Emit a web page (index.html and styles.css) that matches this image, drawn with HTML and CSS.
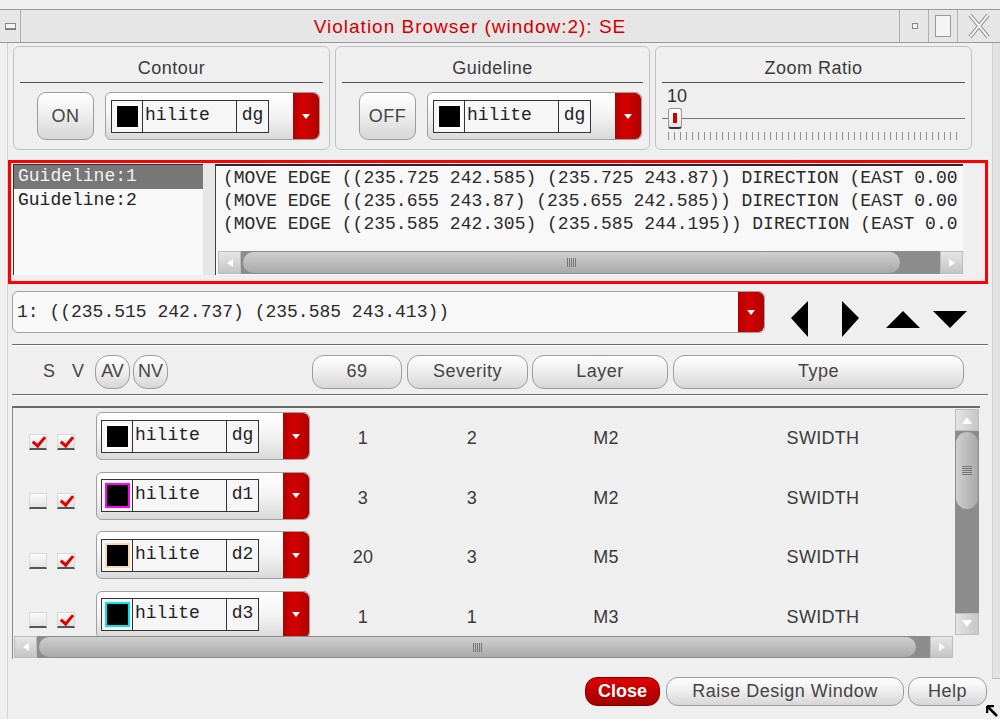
FILE: index.html
```html
<!DOCTYPE html>
<html>
<head>
<meta charset="utf-8">
<title>Violation Browser</title>
<link rel="stylesheet" href="styles.css">
</head>
<body>
<div class="window">
  <div class="titlebar">
    <div class="tb-btn tb-menu"><span class="menu-glyph"></span></div>
    <div class="tb-title">Violation Browser (window:2): SE</div>
    <div class="tb-btn tb-min"><span class="min-glyph"></span></div>
    <div class="tb-btn tb-max"><span class="max-glyph"></span></div>
    <div class="tb-btn tb-close">
      <svg width="24" height="26" viewBox="0 0 24 26"><path d="M3 2 L21 24 M21 2 L3 24" stroke="#8a8a8a" stroke-width="4" fill="none"/><path d="M3 2 L21 24 M21 2 L3 24" stroke="#f2f2f2" stroke-width="2" fill="none"/></svg>
    </div>
  </div>
  <div class="main">
    <div class="frame-left"></div>
    <div class="content">
      <div class="groups">
        <div class="group">
          <div class="group-title">Contour</div>
          <div class="group-body">
            <div class="btn toggle">ON</div>
            <div class="combo">
              <div class="cbox"><div class="sw"><i class="c-white"></i></div><div class="name">hilite</div><div class="suf">dg</div></div>
              <div class="red"><span class="tri"></span></div>
            </div>
          </div>
        </div>
        <div class="group">
          <div class="group-title">Guideline</div>
          <div class="group-body">
            <div class="btn toggle">OFF</div>
            <div class="combo">
              <div class="cbox"><div class="sw"><i class="c-white"></i></div><div class="name">hilite</div><div class="suf">dg</div></div>
              <div class="red"><span class="tri"></span></div>
            </div>
          </div>
        </div>
        <div class="group">
          <div class="group-title">Zoom Ratio</div>
          <div class="zoom-body">
            <div class="zoom-val">10</div>
            <div class="slider"><span class="thumb"><i></i></span></div>
            <div class="ticks"></div>
          </div>
        </div>
      </div>

      <div class="redbox">
        <div class="listbox">
          <div class="li sel">Guideline:1</div>
          <div class="li">Guideline:2</div>
        </div>
        <div class="sash"></div>
        <div class="textarea">
          <div class="lines">
            <div class="line">(MOVE EDGE ((235.725 242.585) (235.725 243.87)) DIRECTION (EAST 0.00</div>
            <div class="line">(MOVE EDGE ((235.655 243.87) (235.655 242.585)) DIRECTION (EAST 0.00</div>
            <div class="line">(MOVE EDGE ((235.585 242.305) (235.585 244.195)) DIRECTION (EAST 0.0</div>
          </div>
          <div class="hscroll">
            <div class="sarrow"><svg width="10" height="10" viewBox="0 0 10 10"><polygon points="8,1 8,9 2,5" fill="#fff"/></svg></div>
            <div class="strack"><div class="sthumb"><span class="grip-h"></span></div></div>
            <div class="sarrow"><svg width="10" height="10" viewBox="0 0 10 10"><polygon points="2,1 2,9 8,5" fill="#fff"/></svg></div>
          </div>
        </div>
      </div>

      <div class="navrow">
        <div class="field">
          <div class="field-text">1: ((235.515 242.737) (235.585 243.413))</div>
          <div class="red"><span class="tri"></span></div>
        </div>
        <svg class="nav nav-left" width="18" height="36" viewBox="0 0 18 36"><polygon points="17,0 17,36 0,17" fill="#000"/></svg>
        <svg class="nav nav-right" width="18" height="36" viewBox="0 0 18 36"><polygon points="1,0 1,36 18,17" fill="#000"/></svg>
        <svg class="nav nav-up" width="34" height="17" viewBox="0 0 34 17"><polygon points="0,17 34,17 17,0" fill="#000"/></svg>
        <svg class="nav nav-down" width="34" height="17" viewBox="0 0 34 17"><polygon points="0,0 34,0 17,17" fill="#000"/></svg>
      </div>

      <div class="sep sep1"></div>

      <div class="header">
        <span class="hl hl-s">S</span>
        <span class="hl hl-v">V</span>
        <div class="btn hbtn pill pill-av">AV</div>
        <div class="btn hbtn pill pill-nv">NV</div>
        <div class="btn hbtn h-num">69</div>
        <div class="btn hbtn h-sev">Severity</div>
        <div class="btn hbtn h-lay">Layer</div>
        <div class="btn hbtn h-type">Type</div>
      </div>

      <div class="sep sep2"></div>

      <div class="table">
        <div class="rows-area">
          <div class="rows">
            <div class="row">
              <span class="cb on"></span><span class="cb on"></span>
              <div class="combo rcombo">
                <div class="cbox"><div class="sw"><i class="c-white"></i></div><div class="name">hilite</div><div class="suf">dg</div></div>
                <div class="red"><span class="tri"></span></div>
              </div>
              <span class="cell c-num">1</span><span class="cell c-sev">2</span><span class="cell c-lay">M2</span><span class="cell c-type">SWIDTH</span>
            </div>
            <div class="row">
              <span class="cb"></span><span class="cb on"></span>
              <div class="combo rcombo">
                <div class="cbox"><div class="sw"><i class="c-mag"></i></div><div class="name">hilite</div><div class="suf">d1</div></div>
                <div class="red"><span class="tri"></span></div>
              </div>
              <span class="cell c-num">3</span><span class="cell c-sev">3</span><span class="cell c-lay">M2</span><span class="cell c-type">SWIDTH</span>
            </div>
            <div class="row">
              <span class="cb"></span><span class="cb on"></span>
              <div class="combo rcombo">
                <div class="cbox"><div class="sw"><i class="c-peach"></i></div><div class="name">hilite</div><div class="suf">d2</div></div>
                <div class="red"><span class="tri"></span></div>
              </div>
              <span class="cell c-num">20</span><span class="cell c-sev">3</span><span class="cell c-lay">M5</span><span class="cell c-type">SWIDTH</span>
            </div>
            <div class="row">
              <span class="cb"></span><span class="cb on"></span>
              <div class="combo rcombo">
                <div class="cbox"><div class="sw"><i class="c-cyan"></i></div><div class="name">hilite</div><div class="suf">d3</div></div>
                <div class="red"><span class="tri"></span></div>
              </div>
              <span class="cell c-num">1</span><span class="cell c-sev">1</span><span class="cell c-lay">M3</span><span class="cell c-type">SWIDTH</span>
            </div>
          </div>
          <div class="vscroll">
            <div class="varrow"><svg width="12" height="10" viewBox="0 0 12 10"><polygon points="1,9 11,9 6,2" fill="#fff"/></svg></div>
            <div class="vtrack"><div class="vthumb"><span class="grip-v"></span></div></div>
            <div class="varrow"><svg width="12" height="10" viewBox="0 0 12 10"><polygon points="1,1 11,1 6,8" fill="#fff"/></svg></div>
          </div>
        </div>
        <div class="hscroll hscroll2">
          <div class="sarrow"><svg width="10" height="10" viewBox="0 0 10 10"><polygon points="8,1 8,9 2,5" fill="#fff"/></svg></div>
          <div class="strack"><div class="sthumb"><span class="grip-h"></span></div></div>
          <div class="sarrow"><svg width="10" height="10" viewBox="0 0 10 10"><polygon points="2,1 2,9 8,5" fill="#fff"/></svg></div>
        </div>
      </div>

      <div class="bottom">
        <div class="btn bbtn close">Close</div>
        <div class="btn bbtn raise">Raise Design Window</div>
        <div class="btn bbtn help">Help</div>
      </div>
    </div>
    <div class="frame-right"><div class="fr-bar"></div></div>
  </div>
  <svg class="resize" width="12" height="12" viewBox="0 0 12 12"><path d="M1 1 L11 11 M1 1 L1 8 M1 1 L8 1" stroke="#000" stroke-width="2.5" fill="none"/></svg>
</div>
</body>
</html>
```

FILE: styles.css
```css
* { box-sizing: border-box; }
html, body { margin: 0; padding: 0; }
body {
  width: 1000px;
  height: 719px;
  overflow: hidden;
  background: #efefef;
  font-family: "Liberation Sans", Arial, sans-serif;
  color: #3a3a3a;
}
.window {
  width: 1000px;
  height: 719px;
  position: relative;
  display: flex;
  flex-direction: column;
  background: #efefef;
}

/* title bar */
.titlebar {
  height: 34px;
  margin-top: 9px;
  border-top: 1px solid #9a9a9a;
  border-bottom: 1px solid #9a9a9a;
  background: #e6e6e6;
  display: flex;
  flex: none;
}
.tb-btn {
  display: flex;
  align-items: center;
  justify-content: center;
}
.tb-menu { width: 21px; border-right: 1px solid #b0b0b0; }
.menu-glyph {
  width: 11px; height: 6px;
  border: 1px solid #888;
  background: #f4f4f4;
  box-shadow: 0 1px 0 #777;
}
.tb-title {
  flex: 1;
  text-align: center;
  color: #d10000;
  font-size: 19px;
  letter-spacing: 1px;
  line-height: 33px;
  padding-left: 20px;
}
.tb-min { width: 29px; border-left: 1px solid #b0b0b0; }
.min-glyph { width: 6px; height: 6px; border: 1px solid #888; background: #f4f4f4; margin-left: 2px; }
.tb-max { width: 29px; border-left: 1px solid #b0b0b0; }
.max-glyph { width: 16px; height: 22px; border: 1px solid #999; background: #f4f4f4; }
.tb-close { width: 43px; border-left: 1px solid #b0b0b0; }

.main { flex: 1; display: flex; }
.frame-left { width: 8px; border-right: 1px solid #d2d2d2; flex: none; }
.content { width: 980px; flex: none; display: flex; flex-direction: column; }
.frame-right { width: 12px; flex: none; display: flex; justify-content: flex-end; }
.fr-bar {
  width: 8px;
  height: 636px;
  background: #e2e2e2;
  border-left: 1px solid #cfcfcf;
  border-bottom: 1px solid #bbb;
}

/* groups */
.groups {
  display: flex;
  gap: 5px;
  padding: 3px 0 0 5px;
  height: 107px;
}
.group {
  height: 104px;
  border: 1px solid #c2c2c2;
  border-radius: 6px;
  padding: 0 6px;
  display: flex;
  flex-direction: column;
}
.group:nth-child(1) { width: 317px; }
.group:nth-child(2) { width: 315px; }
.group:nth-child(3) { width: 317px; }
.group-title {
  height: 36px;
  border-bottom: 1px solid #505050;
  text-align: center;
  font-size: 18px;
  letter-spacing: 0.5px;
  padding-top: 10px;
  line-height: 22px;
  color: #3a3a3a;
}
.group-body {
  display: flex;
  gap: 11px;
  padding: 9px 0 0 17px;
}

.btn {
  display: flex;
  align-items: center;
  justify-content: center;
  border: 1px solid #9c9c9c;
  background: linear-gradient(#ffffff, #efefef 45%, #d6d6d6);
  color: #444;
  font-size: 18px;
  letter-spacing: 0.5px;
}
.toggle { width: 57px; height: 48px; border-radius: 9px; }

.combo {
  width: 215px;
  height: 48px;
  border: 1px solid #a0a0a0;
  border-radius: 6px;
  background: linear-gradient(#ffffff, #f3f3f3 50%, #d9d9d9);
  display: flex;
  align-items: center;
  padding-left: 5px;
  flex: none;
}
.cbox {
  display: flex;
  height: 33px;
  border: 1px solid #333;
  background: #f6f6f6;
}
.sw {
  width: 31px;
  border-right: 1px solid #333;
  display: flex;
  align-items: center;
  justify-content: center;
}
.sw i {
  display: block;
  width: 25px;
  height: 25px;
  background: #000;
  border: 2px solid #fff;
}
.sw i.c-mag { border-color: #ff00ff; }
.sw i.c-peach { border-color: #f6d9ad; }
.sw i.c-cyan { border-color: #00e5ee; }
.name, .suf {
  font-family: "Liberation Mono", "Courier New", monospace;
  font-size: 18px;
  color: #222;
  line-height: 29px;
}
.name { width: 94px; border-right: 1px solid #333; padding-left: 2px; }
.suf { width: 31px; text-align: center; }
.red {
  margin-left: auto;
  width: 26px;
  height: 100%;
  background: linear-gradient(90deg, #b30000, #d40000 40%, #b00000);
  border-radius: 0 6px 6px 0;
  display: flex;
  align-items: center;
  justify-content: center;
  flex: none;
}
.tri {
  width: 0; height: 0;
  border-left: 4px solid transparent;
  border-right: 4px solid transparent;
  border-top: 5px solid #fff;
}

/* zoom ratio */
.zoom-body { position: relative; padding: 5px 0 0 0; }
.zoom-val { font-size: 18px; line-height: 16px; padding-left: 5px; color: #333; }
.slider {
  position: relative;
  height: 22px;
  margin-top: 4px;
}
.slider::before {
  content: "";
  position: absolute;
  left: 0; right: 0; top: 10px;
  height: 1px;
  background: #777;
}
.thumb {
  position: absolute;
  left: 6px; top: 0;
  width: 14px; height: 21px;
  border: 1px solid #999;
  border-bottom: 2px solid #333;
  border-radius: 3px;
  background: linear-gradient(#fff, #e4e4e4);
  display: flex;
  justify-content: center;
  align-items: center;
}
.thumb i { display: block; width: 4px; height: 10px; background: #d00000; }
.ticks {
  margin: 2px 6px 0 6px;
  height: 8px;
  background: repeating-linear-gradient(90deg, #8e8e8e 0 1px, transparent 1px 6px);
}

/* red box */
.redbox {
  margin: 10px 0 0 0;
  width: 980px;
  height: 124px;
  border: 3px solid #ff0000;
  padding: 1px 20px 6px 2px;
  display: flex;
}
.listbox {
  width: 190px;
  background: #f8f8f8;
  border-top: 1px solid #333;
  border-left: 1px solid #333;
  font-family: "Liberation Mono", "Courier New", monospace;
  font-size: 18px;
  color: #222;
}
.li { height: 24px; line-height: 23px; padding-left: 4px; }
.li.sel { background: #777; color: #f2f2f2; }
.sash { width: 12px; background: #e6e6e6; }
.textarea {
  width: 748px;
  background: #f8f8f8;
  border-top: 2px solid #2a2a2a;
  border-left: 1px solid #444;
  display: flex;
  flex-direction: column;
  overflow: hidden;
}
.lines {
  padding: 1px 0 0 7px;
  font-family: "Liberation Mono", "Courier New", monospace;
  font-size: 18px;
  line-height: 23px;
  color: #2a2a2a;
}
.line { white-space: nowrap; }
.hscroll {
  margin: auto 0 1px 2px;
  height: 23px;
  display: flex;
  width: 745px;
  flex: none;
}
.sarrow {
  width: 23px;
  background: linear-gradient(#e6e6e6, #c4c4c4);
  border: 1px solid #bdbdbd;
  display: flex;
  align-items: center;
  justify-content: center;
  flex: none;
}
.strack {
  flex: 1;
  background: #8c8c8c;
  padding: 1px 40px 1px 2px;
  display: flex;
}
.sthumb {
  flex: 1;
  border-radius: 11px;
  background: linear-gradient(#cfcfcf, #b8b8b8 60%, #a8a8a8);
  display: flex;
  align-items: center;
  justify-content: center;
}
.grip-h {
  width: 9px; height: 9px;
  background: repeating-linear-gradient(90deg, #777 0 1px, transparent 1px 2px);
}

/* nav row */
.navrow {
  margin-top: 7px;
  height: 42px;
  display: flex;
  align-items: flex-start;
  padding-left: 4px;
}
.field {
  width: 753px;
  height: 42px;
  border: 1px solid #a0a0a0;
  border-radius: 6px;
  background: #f8f8f8;
  display: flex;
  align-items: center;
}
.field-text {
  padding-left: 4px;
  font-family: "Liberation Mono", "Courier New", monospace;
  font-size: 18px;
  color: #2a2a2a;
  white-space: nowrap;
}
.nav { flex: none; display: block; }
.nav-left { margin: 10px 0 0 26px; }
.nav-right { margin: 10px 0 0 32px; }
.nav-up { margin: 20px 0 0 27px; }
.nav-down { margin: 20px 0 0 13px; }

.sep {
  margin-left: 4px;
  width: 976px;
  border-top: 1px solid #6a6a6a;
  border-bottom: 1px solid #ffffff;
  height: 2px;
  flex: none;
}
.sep1 { margin-top: 11px; }
.sep2 { margin-top: 5px; }

/* header */
.header {
  margin-top: 8px;
  height: 35px;
  display: flex;
  align-items: center;
  flex: none;
}
.hl { font-size: 18px; color: #444; }
.hl-s { margin-left: 35px; }
.hl-v { margin-left: 17px; }
.hbtn { height: 34px; border-radius: 12px; flex: none; }
.pill { width: 35px; border-radius: 14px; padding: 0; letter-spacing: 0; }
.pill-av { margin-left: 11px; }
.pill-nv { margin-left: 3px; }
.h-num { width: 90px; margin-left: 144px; }
.h-sev { width: 121px; margin-left: 5px; }
.h-lay { width: 136px; margin-left: 4px; }
.h-type { width: 291px; margin-left: 5px; }

/* table */
.table {
  margin: 10px 0 0 4px;
  width: 968px;
  height: 253px;
  border-top: 2px solid #6a6a6a;
  border-left: 1px solid #8a8a8a;
  display: flex;
  flex-direction: column;
  flex: none;
}
.rows-area {
  height: 228px;
  display: flex;
}
.rows {
  width: 942px;
  overflow: hidden;
  padding-top: 1px;
}
.row {
  height: 59.5px;
  display: flex;
  align-items: center;
}
.cb {
  width: 18px;
  height: 16px;
  flex: none;
  background: linear-gradient(#fbfbfb, #e2e2e2);
  border: 1px solid #d8d8d8;
  border-bottom: 2px solid #555;
  margin-top: 6px;
  position: relative;
}
.cb:first-child { margin-left: 16px; }
.cb + .cb { margin-left: 10px; }
.cb.on::after {
  content: "";
  position: absolute;
  left: 5px; top: -1px;
  width: 5px; height: 10px;
  border-right: 3px solid #e00000;
  border-bottom: 3px solid #e00000;
  transform: rotate(40deg);
}
.rcombo {
  width: 214px;
  margin-left: 21px;
  align-self: flex-start;
  margin-top: 3px;
  padding-left: 4px;
}
.cell { text-align: center; font-size: 18px; color: #3a3a3a; flex: none; letter-spacing: 0.3px; }
.c-num { width: 106px; }
.c-sev { width: 112px; }
.c-lay { width: 156px; }
.c-type { width: 278px; }

.vscroll {
  width: 24px;
  margin-top: 1px;
  height: 226px;
  display: flex;
  flex-direction: column;
}
.varrow {
  height: 22px;
  background: linear-gradient(90deg, #e4e4e4, #c6c6c6);
  border: 1px solid #bdbdbd;
  display: flex;
  align-items: center;
  justify-content: center;
}
.vtrack {
  flex: 1;
  background: #8c8c8c;
  padding: 1px 1px 104px 1px;
  display: flex;
  flex-direction: column;
}
.vthumb {
  flex: 1;
  border-radius: 11px;
  background: linear-gradient(90deg, #cfcfcf, #b8b8b8 60%, #a8a8a8);
  display: flex;
  align-items: center;
  justify-content: center;
}
.grip-v {
  width: 10px; height: 10px;
  background: repeating-linear-gradient(180deg, #777 0 1px, transparent 1px 2px);
}
.hscroll2 {
  margin: 0 0 0 1px;
  width: 939px;
  height: 22px;
}
.hscroll2 .strack { padding-right: 14px; }

/* bottom buttons */
.bottom {
  margin-top: 18px;
  display: flex;
  justify-content: flex-end;
  padding-right: 1px;
}
.bbtn { height: 29px; border-radius: 12px; }
.close {
  width: 75px;
  background: linear-gradient(#e00000, #c00000 50%, #a00000);
  border-color: #8a0000;
  color: #fff;
  font-weight: bold;
  letter-spacing: 0;
}
.raise { width: 238px; margin-left: 6px; }
.help { width: 79px; margin-left: 4px; }

.resize { position: absolute; left: 986px; top: 705px; }
```
